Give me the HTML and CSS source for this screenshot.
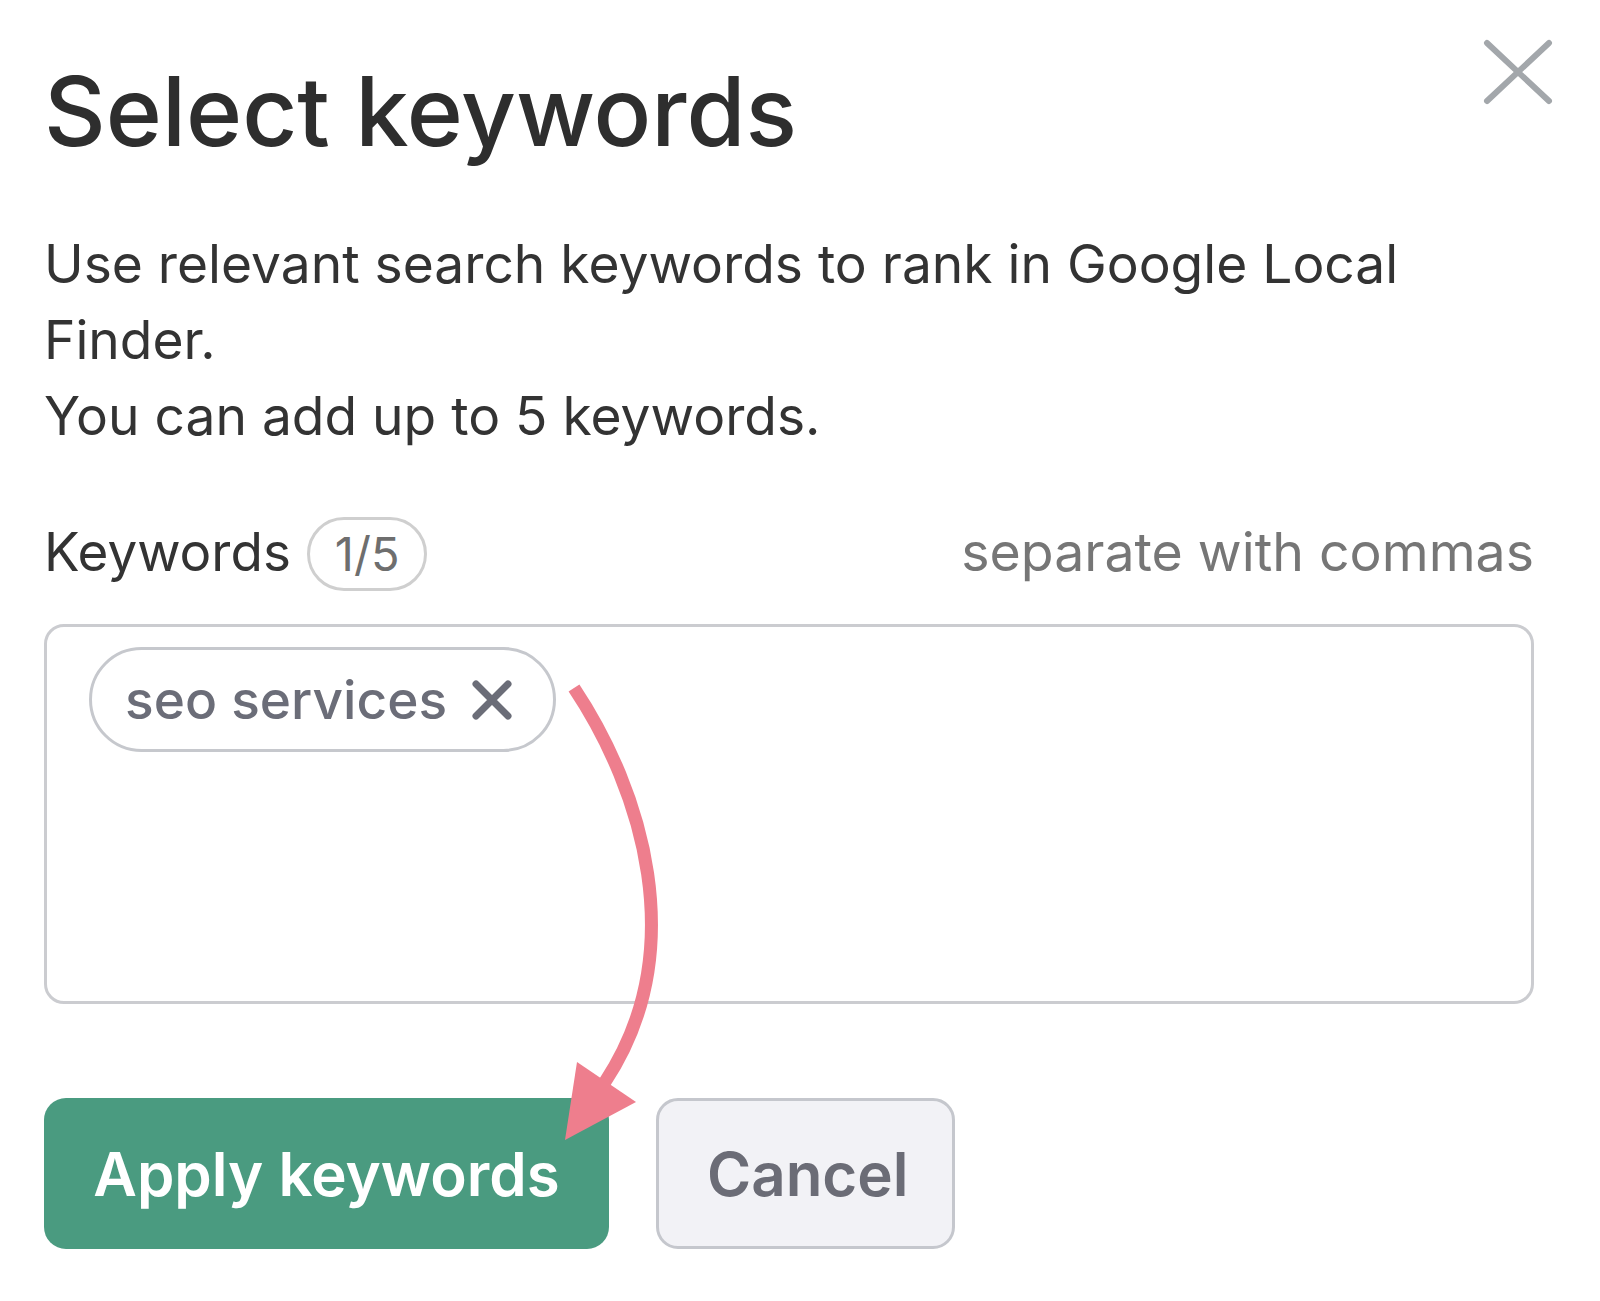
FILE: index.html
```html
<!DOCTYPE html>
<html lang="en">
<head>
<meta charset="utf-8">
<title>Select keywords</title>
<link rel="stylesheet" href="styles.css">
</head>
<body>
<div class="modal">
  <div class="header">
    <h1 class="title">Select keywords</h1>
    <button class="close" aria-label="Close">
      <svg width="70" height="66" viewBox="0 0 70 66"><path d="M4 4 L66 62 M66 4 L4 62" stroke="#a3a7ab" stroke-width="6" stroke-linecap="round" fill="none"/></svg>
    </button>
  </div>
  <p class="text">Use relevant search keywords to rank in Google Local Finder.</p>
  <p class="text">You can add up to 5 keywords.</p>
  <div class="field-row">
    <div class="label-group">
      <span class="label">Keywords</span>
      <span class="badge">1/5</span>
    </div>
    <span class="hint">separate with commas</span>
  </div>
  <div class="input-box">
    <span class="chip">seo services
      <svg class="chip-x" width="40" height="40" viewBox="0 0 40 40"><path d="M4 4 L36 36 M36 4 L4 36" stroke="#6b6d78" stroke-width="7" stroke-linecap="round" fill="none"/></svg>
    </span>
  </div>
  <div class="actions">
    <button class="btn btn-primary">Apply keywords</button>
    <button class="btn btn-secondary">Cancel</button>
  </div>
</div>
<svg class="arrow" width="1600" height="1301" viewBox="0 0 1600 1301">
  <path d="M574 688 C642 790 692 950 605 1082" stroke="#ee7e8d" stroke-width="13" fill="none"/>
  <polygon points="577,1062 636,1102 565,1140" fill="#ee7e8d"/>
</svg>
</body>
</html>
```
FILE: styles.css
```css
html, body {
  margin: 0;
  padding: 0;
  background: #ffffff;
}
body {
  font-family: Inter, "Noto Sans", "Liberation Sans", sans-serif;
  color: #333333;
  width: 1600px;
  height: 1301px;
  overflow: hidden;
  position: relative;
}
.modal {
  padding: 0 66px 0 44px;
}
.header {
  display: flex;
  justify-content: space-between;
  align-items: flex-start;
  margin-right: -19px;
  padding-top: 39px;
}
.title {
  margin: 15px 0 0 0;
  font-size: 95.6px;
  line-height: 114px;
  font-weight: 500;
  color: #2e2e2e;
  letter-spacing: 0;
}
.close {
  border: 0;
  background: none;
  padding: 0;
  margin: 0;
  width: 70px;
  height: 66px;
  display: block;
}
.close svg { display: block; }
.text {
  margin: 0;
  font-size: 53.3px;
  line-height: 76px;
  color: #333333;
}
.header + .text { margin-top: 58px; }
.field-row {
  display: flex;
  justify-content: space-between;
  align-items: baseline;
  margin-top: 63px;
}
.label-group {
  display: flex;
  align-items: baseline;
  gap: 16px;
}
.label {
  font-size: 53px;
  color: #333333;
}
.badge {
  display: inline-block;
  height: 68px;
  line-height: 68px;
  padding: 0 25px;
  border: 3px solid #cfcfcf;
  border-radius: 40px;
  font-size: 47px;
  color: #6e6e6e;
}
.hint {
  font-size: 53.6px;
  color: #767676;
}
.input-box {
  margin-top: 33px;
  border: 3px solid #cbccd0;
  border-radius: 20px;
  padding: 20px 42px;
  box-sizing: content-box;
  height: 334px;
}
.chip {
  display: inline-flex;
  align-items: center;
  gap: 25px;
  height: 99px;
  padding: 0 41px 0 33px;
  border: 3px solid #c6c8cd;
  border-radius: 60px;
  font-size: 53.2px;
  font-weight: 500;
  color: #6b6d78;
}
.chip-x { display: block; }
.actions {
  display: flex;
  gap: 47px;
  margin-top: 94px;
}
.btn {
  font-family: Inter, "Noto Sans", "Liberation Sans", sans-serif;
  font-size: 60px;
  font-weight: 600;
  height: 151px;
  border-radius: 22px;
  padding: 0 48px;
  margin: 0;
  cursor: pointer;
}
.btn-primary {
  background: #4a9b80;
  color: #ffffff;
  border: 0;
  width: 565px;
}
.btn-secondary {
  background: #f2f2f6;
  color: #6b6c76;
  border: 3px solid #c5c7cd;
  width: 299px;
}
.arrow {
  position: absolute;
  top: 0;
  left: 0;
  pointer-events: none;
}
```
